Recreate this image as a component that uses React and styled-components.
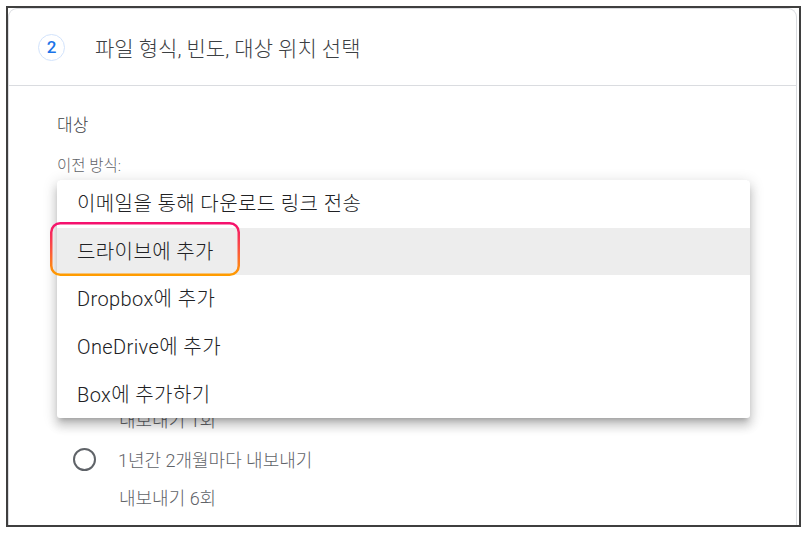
import React from 'react'
import styled, { createGlobalStyle } from 'styled-components'

const GlobalStyle = createGlobalStyle`
  html, body {
    margin: 0;
    background: #fff;
    font-family: Roboto, "Noto Sans CJK KR", "Noto Sans", sans-serif;
  }
`

const destinations = [
  '이메일을 통해 다운로드 링크 전송',
  '드라이브에 추가',
  'Dropbox에 추가',
  'OneDrive에 추가',
  'Box에 추가하기',
]

function App() {
  return (
    <>
      <GlobalStyle />
      <Frame>
        <Card>
          <Header>
            <StepBadge>2</StepBadge>
            <Title>파일 형식, 빈도, 대상 위치 선택</Title>
          </Header>
          <Body>
            <SectionLabel>대상</SectionLabel>
            <FieldLabel>이전 방식:</FieldLabel>
            <SelectAnchor>
              <SelectField>이메일을 통해 다운로드 링크 전송</SelectField>
              <Menu>
                {destinations.map((d, i) => (
                  <MenuItem key={d} active={i === 1}>{d}</MenuItem>
                ))}
                <Ring width="190" height="54" viewBox="0 0 190 54">
                  <defs>
                    <linearGradient id="ringGrad" x1="0" y1="0" x2="0" y2="1">
                      <stop offset="0" stopColor="#f5106e" />
                      <stop offset="0.55" stopColor="#fb5a3c" />
                      <stop offset="1" stopColor="#ff9c00" />
                    </linearGradient>
                  </defs>
                  <rect x="1.25" y="1.25" width="187.5" height="51.5" rx="9" fill="none" stroke="url(#ringGrad)" strokeWidth="2.5" />
                </Ring>
              </Menu>
            </SelectAnchor>
            <SectionLabel style={{ marginTop: 40 }}>빈도</SectionLabel>
            <RadioGroup>
              <RadioRow>
                <Radio />
                <RadioText>1회 내보내기</RadioText>
              </RadioRow>
              <Note>내보내기 1회</Note>
              <RadioRow>
                <Radio />
                <RadioText>1년간 2개월마다 내보내기</RadioText>
              </RadioRow>
              <Note>내보내기 6회</Note>
            </RadioGroup>
          </Body>
        </Card>
      </Frame>
    </>
  )
}

export default App

let Frame = styled.div`
  box-sizing: border-box;
  width: 795px;
  height: 521px;
  margin: 6px;
  border: 2px solid #3f3f3f;
  overflow: hidden;
  background: #fff;
`

let Card = styled.div`
  box-sizing: border-box;
  width: 789px;
  min-height: 600px;
  border: 1px solid #dadce0;
  border-bottom: none;
  border-radius: 9px 9px 0 0;
`

let Header = styled.div`
  display: flex;
  align-items: center;
  height: 76px;
  padding-left: 29px;
  border-bottom: 1px solid #dadce0;
`

let StepBadge = styled.div`
  box-sizing: border-box;
  width: 27px;
  height: 27px;
  border: 1px solid #d2e3fc;
  border-radius: 50%;
  display: flex;
  align-items: center;
  justify-content: center;
  color: #1a73e8;
  font-size: 17px;
  font-weight: 500;
`

let Title = styled.div`
  margin-left: 30px;
  font-size: 21px;
  font-weight: 300;
  color: #3c4043;
`

let Body = styled.div`
  display: flex;
  flex-direction: column;
  align-items: flex-start;
  padding: 28px 0 0 48px;
`

let SectionLabel = styled.div`
  font-size: 17px;
  line-height: 22px;
  font-weight: 300;
  color: #3c4043;
`

let FieldLabel = styled.div`
  margin-top: 20px;
  font-size: 15.5px;
  line-height: 20px;
  font-weight: 300;
  color: #5f6368;
`

let SelectAnchor = styled.div`
  position: relative;
  margin-top: 4px;
  width: 693px;
`

let SelectField = styled.div`
  box-sizing: border-box;
  height: 56px;
  padding: 0 16px;
  display: flex;
  align-items: center;
  border: 1px solid #80868b;
  border-radius: 4px;
  font-size: 16px;
  color: #202124;
`

let Menu = styled.div`
  position: absolute;
  top: 0;
  left: 0;
  width: 693px;
  background: #fff;
  border-radius: 3px;
  box-shadow: 0 5px 5px -3px rgba(0, 0, 0, 0.2), 0 8px 10px 1px rgba(0, 0, 0, 0.14), 0 3px 14px 2px rgba(0, 0, 0, 0.12);
  z-index: 5;
`

let MenuItem = styled.div`
  height: 47.6px;
  display: flex;
  align-items: center;
  padding-left: 20px;
  padding-bottom: 2px;
  box-sizing: border-box;
  font-size: 20px;
  font-weight: 300;
  letter-spacing: 0.4px;
  color: #202124;
  background: ${(p) => (p.active ? '#ededed' : 'transparent')};
`

let Ring = styled.svg`
  position: absolute;
  left: -7px;
  top: 42px;
  pointer-events: none;
`

let RadioGroup = styled.div`
  margin-top: 63px;
  display: flex;
  flex-direction: column;
`

let RadioRow = styled.div`
  height: 40px;
  display: flex;
  align-items: center;
  padding-left: 16px;
  & + div {
    margin-top: 10px;
  }
`

let Radio = styled.span`
  box-sizing: border-box;
  width: 23px;
  height: 23px;
  border: 2px solid #5f6368;
  border-radius: 50%;
`

let RadioText = styled.span`
  margin-left: 22px;
  font-size: 18px;
  font-weight: 300;
  color: #5f6368;
`

let Note = styled.div`
  padding-left: 62px;
  margin-bottom: 8px;
  font-size: 18px;
  line-height: 20px;
  font-weight: 300;
  color: #5f6368;
`
